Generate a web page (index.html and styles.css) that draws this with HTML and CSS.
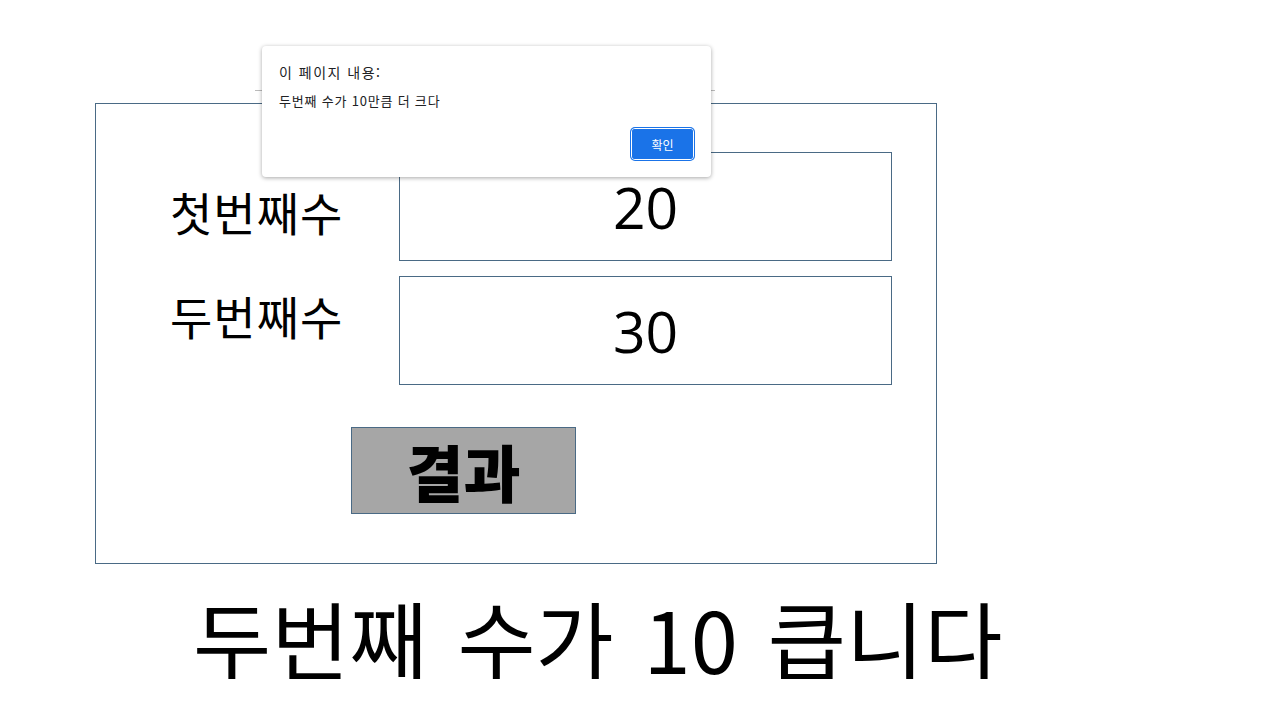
FILE: index.html
```html
<!DOCTYPE html>
<html lang="ko">

<head>
  <meta charset="UTF-8">
  <meta name="viewport" content="width=device-width, initial-scale=1.0">
  <title>두 수 비교</title>
  <link rel="stylesheet" href="styles.css">
</head>

<body>
  <div class="slide">
    <div class="panel">
      <div class="row">
        <div class="label label-first">첫번째수</div>
        <div class="field">20</div>
      </div>
      <div class="row">
        <div class="label label-second">두번째수</div>
        <div class="field">30</div>
      </div>
      <div class="actions">
        <button class="result">결과</button>
      </div>
    </div>
    <p class="answer">두번째 수가 10 큽니다</p>
  </div>

  <!-- browser bits behind the alert -->
  <div class="chrome-line"></div>

  <div class="dialog">
    <div class="dialog-title">이 페이지 내용:</div>
    <div class="dialog-msg">두번째 수가 10만큼 더 크다</div>
    <div class="dialog-actions">
      <button class="ok">확인</button>
    </div>
  </div>
</body>

</html>
```

FILE: styles.css
```css
body {
  margin: 0;
  background: #fff;
  font-family: "Noto Sans CJK KR", "Noto Sans", sans-serif;
  color: #000;
}

.slide {
  padding: 103px 0 0 95px;
}

.panel {
  box-sizing: border-box;
  width: 842px;
  height: 461px;
  border: 1px solid #4a6a85;
  padding-top: 48px;
}

.row {
  display: grid;
  grid-template-columns: 303px 493px;
  margin-bottom: 15px;
}

.label {
  padding-left: 74px;
  font-size: 46px;
  letter-spacing: 1px;
  line-height: 1;
}

.label-first {
  padding-top: 36px;
}

.label-second {
  padding-top: 16px;
}

.field {
  box-sizing: border-box;
  height: 109px;
  border: 1px solid #4a6a85;
  display: flex;
  align-items: center;
  justify-content: center;
  font-family: "Open Sans", sans-serif;
  font-size: 57px;
}

.actions {
  padding: 27px 0 0 255px;
}

.result {
  box-sizing: border-box;
  width: 225px;
  height: 87px;
  border: 1px solid #4a6a85;
  background: #a6a6a6;
  font-family: "Noto Sans CJK KR", sans-serif;
  font-weight: 900;
  font-size: 62px;
  line-height: 1;
  padding: 0;
  color: #000;
}

.answer {
  margin: 30px 0 0 98px;
  font-size: 85px;
  line-height: 1;
  word-spacing: 6px;
}

.chrome-line {
  position: absolute;
  left: 255px;
  top: 90px;
  width: 460px;
  height: 1px;
  background: #bbb;
}

.dialog {
  position: absolute;
  left: 262px;
  top: 46px;
  box-sizing: border-box;
  width: 449px;
  height: 131px;
  background: #fff;
  border-radius: 4px;
  box-shadow: 0 1px 4px rgba(0, 0, 0, 0.35);
  padding: 16px 17px 17px;
  font-family: "Noto Sans CJK KR", sans-serif;
  color: #202124;
}

.dialog-title {
  font-size: 14px;
  letter-spacing: 1.5px;
  line-height: 20px;
}

.dialog-msg {
  margin-top: 11px;
  font-size: 13px;
  letter-spacing: 0.8px;
  line-height: 16px;
}

.dialog-actions {
  display: flex;
  justify-content: flex-end;
  margin-top: 19px;
}

.ok {
  box-sizing: border-box;
  width: 63px;
  height: 32px;
  background: #1a73e8;
  color: #fff;
  border: 1px solid #fff;
  outline: 2px solid #1a73e8;
  outline-offset: -3px;
  border-radius: 4px;
  box-shadow: 0 0 0 1px #1a73e8;
  font-family: inherit;
  font-size: 12px;
  padding: 0;
}
```
